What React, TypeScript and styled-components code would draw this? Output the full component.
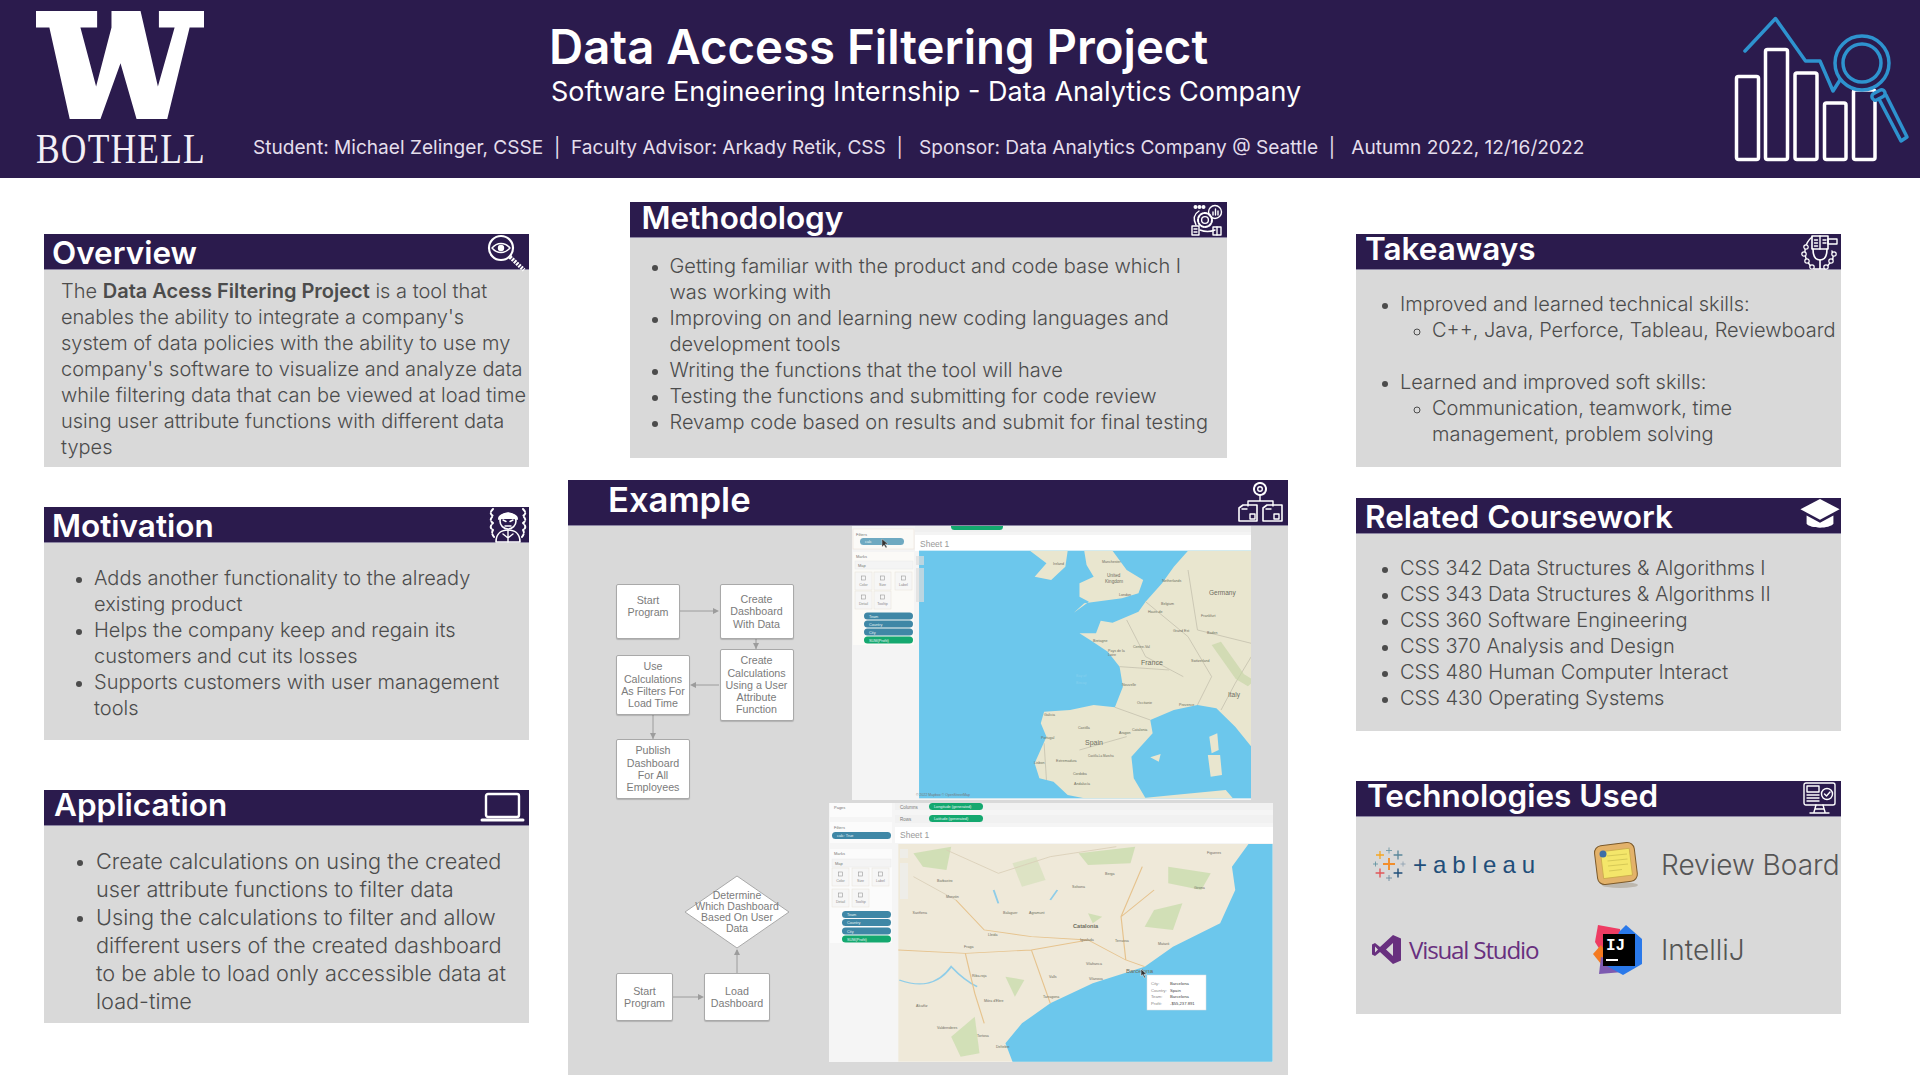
import React from "react";
import styled, { createGlobalStyle } from "styled-components";

const Global = createGlobalStyle`
  html, body { margin: 0; padding: 0; background: #fff; }
  body { font-family: Inter, "Liberation Sans", sans-serif; }
`;

const PURPLE = "#2b1b4d";

const Page = styled.div`
  width: 1920px;
  height: 1080px;
  overflow: hidden;
  background: #fff;
  display: flex;
  flex-direction: column;
`;

const Header = styled.header`
  height: 178px;
  flex: none;
  background: ${PURPLE};
  display: flex;
  position: relative;
`;

const Logo = styled.div`
  width: 168px;
  margin-left: 36px;
  padding-top: 11px;
  flex: none;
`;

const LogoMark = styled.svg`
  display: block;
  width: 168px;
  height: 108px;
`;

const LogoWord = styled.div`
  font-family: "Liberation Serif", serif;
  font-size: 42px;
  line-height: 34px;
  margin-top: 13px;
  color: #f3eff6;
  letter-spacing: 1.4px;
  white-space: nowrap;
  transform: scaleX(0.845);
  transform-origin: left center;
`;

const HeaderText = styled.div`
  margin-left: 49px;
  display: flex;
  flex-direction: column;
  color: #fff;
`;

const Title = styled.h1`
  margin: 19px 0 0 296px;
  font-size: 47.3px;
  line-height: 56px;
  font-weight: 600;
  white-space: nowrap;
`;

const Subtitle = styled.div`
  margin: 0 0 0 298px;
  font-size: 27px;
  line-height: 34px;
  font-weight: 400;
  white-space: nowrap;
`;

const Meta = styled.div`
  margin-top: 25px;
  font-size: 19.1px;
  line-height: 26px;
  color: #e4deec;
  white-space: pre;
`;

const HeaderArt = styled.svg`
  position: absolute;
  right: 0;
  top: 0;
  width: 187px;
  height: 178px;
`;

const Main = styled.main`
  flex: 1;
  display: flex;
  position: relative;
`;

const Column = styled.div<{ $left: number; $width: number; $top: number }>`
  margin-left: ${(p) => p.$left}px;
  width: ${(p) => p.$width}px;
  padding-top: ${(p) => p.$top}px;
  flex: none;
  display: flex;
  flex-direction: column;
  align-items: center;
`;

const Card = styled.section<{ $w: number; $h: number; $after?: number }>`
  width: ${(p) => p.$w}px;
  height: ${(p) => p.$h}px;
  margin-bottom: ${(p) => p.$after ?? 0}px;
  background: #d9d9d9;
  flex: none;
  display: flex;
  flex-direction: column;
`;

const CardHead = styled.div<{ $h?: number; $pad: number; $iconGap: number }>`
  height: ${(p) => p.$h ?? 35}px;
  flex: none;
  background: ${PURPLE};
  border-bottom: 1px solid #8d86a3;
  box-sizing: content-box;
  padding-left: ${(p) => p.$pad}px;
  padding-right: ${(p) => p.$iconGap}px;
  display: flex;
  align-items: center;
  justify-content: space-between;
  position: relative;
  z-index: 1;
`;

const CardTitle = styled.h2<{ $size?: number; $dy?: number }>`
  margin: ${(p) => p.$dy ?? 0}px 0 0;
  align-self: flex-start;
  color: #fff;
  font-size: ${(p) => p.$size ?? 31.5}px;
  font-weight: 600;
  line-height: 35px;
  white-space: nowrap;
`;

const HeadIcon = styled.svg<{ $dy?: number }>`
  flex: none;
  overflow: visible;
  margin-top: ${(p) => p.$dy ?? 0}px;
`;

const CardBody = styled.div<{ $top: number; $left: number; $size?: number; $line?: number }>`
  padding-top: ${(p) => p.$top}px;
  padding-left: ${(p) => p.$left}px;
  padding-right: 0;
  font-size: ${(p) => p.$size ?? 20}px;
  line-height: ${(p) => p.$line ?? 26}px;
  color: #4c4c4c;
  font-weight: 300;
  min-height: 0;
  flex: 1;

  strong {
    font-weight: 600;
  }
`;

const Lines = styled.div`
  white-space: pre;
`;

const Bullets = styled.ul<{ $indent?: number; $after?: number }>`
  list-style: disc;
  margin: 0 0 ${(p) => p.$after ?? 0}px;
  padding: 0 0 0 ${(p) => p.$indent ?? 0}px;

  li {
    white-space: pre;
  }
  li::marker {
    font-size: 0.9em;
  }
`;

const Nested = styled.ul`
  list-style: circle;
  margin: 0;
  padding: 0 0 0 32px;

  li {
    white-space: pre;
  }
`;

const ExampleBody = styled.div`
  flex: 1;
  display: flex;
  min-height: 0;
`;

const Diagram = styled.div`
  position: relative;
  width: 261.5px;
  flex: none;
`;

const DiagramLines = styled.svg`
  position: absolute;
  left: 0;
  top: 0;
  width: 261.5px;
  height: 549px;
`;

const FlowNode = styled.div<{ $x: number; $y: number; $w: number; $h: number; $raise?: number }>`
  position: absolute;
  left: ${(p) => p.$x}px;
  top: ${(p) => p.$y}px;
  width: ${(p) => p.$w}px;
  height: ${(p) => p.$h}px;
  box-sizing: border-box;
  background: #fff;
  border: 1px solid #a9a9a9;
  border-radius: 2px;
  box-shadow: 0 1px 1px rgba(0, 0, 0, 0.18);
  display: flex;
  align-items: center;
  justify-content: center;
  text-align: center;
  font-family: "Liberation Sans", sans-serif;
  font-size: 10.7px;
  line-height: 12.3px;
  color: #7b7b7b;
  padding-bottom: ${(p) => p.$raise ?? 0}px;
`;

const DiamondText = styled.div`
  position: absolute;
  left: 117px;
  top: 350px;
  width: 104px;
  height: 72px;
  display: flex;
  align-items: center;
  justify-content: center;
  text-align: center;
  font-family: "Liberation Sans", sans-serif;
  font-size: 10.5px;
  line-height: 11px;
  color: #7b7b7b;
`;

const Shots = styled.div`
  width: 443.5px;
  flex: none;
  display: flex;
  flex-direction: column;
  align-items: center;
  gap: 3px;
`;

const Shot = styled.svg`
  display: block;
  flex: none;
  font-family: "Liberation Sans", sans-serif;
`;

const TechGrid = styled.div`
  flex: 1;
  padding: 4px 0 0 16px;
  display: grid;
  grid-template-columns: 221px 1fr;
  grid-template-rows: 87px 83px;
  align-items: center;
  align-content: start;
`;

const TechItem = styled.div<{ $gap: number }>`
  display: flex;
  align-items: center;
  gap: ${(p) => p.$gap}px;
`;

const TableauWord = styled.span`
  font-family: "Liberation Sans", sans-serif;
  font-size: 24px;
  color: #1f4e79;
  letter-spacing: 6px;
  white-space: nowrap;
`;

const VSWord = styled.span`
  font-family: "Open Sans", sans-serif;
  font-size: 24.2px;
  color: #68307f;
  letter-spacing: -1.2px;
  white-space: nowrap;
`;

const TechName = styled.span`
  font-size: 28px;
  font-weight: 300;
  color: #555;
  white-space: nowrap;
`;

const ic = { fill: "none", stroke: "#fff", strokeWidth: 1.4, strokeLinejoin: "round", strokeLinecap: "round" } as const;

const EyeIcon = () => (
  <HeadIcon width="38" height="36" viewBox="0 0 38 36" $dy={2}>
    <circle cx="13" cy="13" r="12" {...ic} strokeWidth={2.2} />
    <path d="M4 13c5-6 13-6 18 0-5 6-13 6-18 0z" {...ic} />
    <circle cx="13" cy="13" r="3.2" fill="#fff" />
    <path d="M22 22 L36 35" stroke="#fff" strokeWidth={4} strokeDasharray="2 1" fill="none" />
  </HeadIcon>
);

const WorkerIcon = () => (
  <HeadIcon width="40" height="37" viewBox="0 0 40 37">
    <path d="M11 13c0-7 18-7 18 0" {...ic} strokeWidth={2} fill="#fff" />
    <circle cx="20" cy="15" r="8" {...ic} strokeWidth={1.6} />
    <path d="M15 14l3 1.5M25 14l-3 1.5M17 20h6" {...ic} />
    <path d="M8 36c0-9 6-12 12-12s12 3 12 12z" {...ic} strokeWidth={1.6} />
    <path d="M20 24v12M15 28l5 4 5-4" {...ic} />
    <path d="M5 3c-3 3-3 5 0 7-3 3-3 5 0 7-3 3-3 5 0 7-2 3 0 6 2 8M35 3c3 3 3 5 0 7 3 3 3 5 0 7 3 3 3 5 0 7 2 3 0 6-2 8" {...ic} strokeWidth={2} strokeDasharray="3 2" />
  </HeadIcon>
);

const LaptopIcon = () => (
  <HeadIcon width="43" height="31" viewBox="0 0 43 31">
    <rect x="5" y="2" width="33" height="23" rx="2" {...ic} strokeWidth={2.4} />
    <path d="M1 28h41" {...ic} strokeWidth={3} />
  </HeadIcon>
);

const CogFlowIcon = () => (
  <HeadIcon width="33" height="32" viewBox="0 0 31 32">
    <circle cx="4.5" cy="3" r="1.3" {...ic} fill="#fff" />
    <circle cx="8.5" cy="3" r="1.3" {...ic} fill="#fff" />
    <circle cx="12.5" cy="3" r="1.3" {...ic} fill="#fff" />
    <circle cx="14" cy="16" r="7" {...ic} strokeWidth={2} strokeDasharray="2.5 1.5" />
    <circle cx="14" cy="16" r="3.4" {...ic} />
    <path d="M5 21c-3-6-2-11 3-14M24 26c-5 2-10 2-15 0" {...ic} />
    <circle cx="24" cy="8" r="6.5" {...ic} />
    <path d="M22 11V8M24.5 11V5M27 11V7" {...ic} />
    <path d="M1 22h7v9H1zM3 25h3M3 28h3" {...ic} />
    <rect x="22" y="23" width="8" height="8" {...ic} />
    <path d="M26 23v8" {...ic} />
  </HeadIcon>
);

const ServerCogIcon = () => (
  <HeadIcon width="45" height="40" viewBox="0 0 45 40" $dy={-1}>
    <circle cx="22" cy="7" r="6" {...ic} strokeDasharray="2.5 1" strokeWidth={2} />
    <circle cx="22" cy="7" r="2.3" {...ic} />
    <path d="M22 13v6M10 24v-5h25v5" {...ic} />
    <path d="M1 26l4-3h14v16H1zM25 26l4-3h15v16H25z" {...ic} strokeWidth={1.6} />
    <path d="M12 32h5v5h-5zM36 32h5v5h-5zM4 27h5M28 27h5" {...ic} />
  </HeadIcon>
);

const MicBookIcon = () => (
  <HeadIcon width="36" height="36" viewBox="0 0 36 36">
    <path d="M10 2h16v13H10z" {...ic} strokeWidth={1.6} />
    <path d="M18 2v13M12.5 6h3M12.5 9h3M12.5 12h3M21 6h3M21 9h3" {...ic} />
    <rect x="26" y="5" width="9" height="5" {...ic} />
    <path d="M11 15c0 8 3 11 7 11s7-3 7-11" {...ic} strokeWidth={1.6} />
    <path d="M18 26v9M12 35h12" {...ic} strokeWidth={1.6} />
    <path d="M10 3C3 9 1 18 5 27l5 7M30 17c2 5 1 10-3 13l-3 4" {...ic} />
    {[[4, 13], [2, 20], [5, 27], [10, 33], [32, 20], [29, 27], [24, 33]].map(([x, y], i) => (
      <circle key={i} cx={x} cy={y} r="2.2" fill={PURPLE} {...{ stroke: "#fff", strokeWidth: 1.2 }} />
    ))}
  </HeadIcon>
);

const HatIcon = () => (
  <HeadIcon width="42" height="33" viewBox="0 0 40 32" $dy={-2}>
    <path d="M20 1 L39 11 L20 21 L1 11z" fill="#fff" />
    <path d="M7 17v8c4 5 22 5 26 0v-8l-13 7z" fill="#fff" />
  </HeadIcon>
);

const MonitorIcon = () => (
  <HeadIcon width="33" height="32" viewBox="0 0 33 32" $dy={-1}>
    <rect x="1" y="1" width="31" height="22" rx="2" {...ic} />
    <path d="M4 4h12v6H4zM4 13h12M4 16h12M4 19h12" {...ic} />
    <circle cx="24" cy="12" r="5.5" {...ic} />
    <path d="M21.5 12l2 2 3.5-4" {...ic} />
    <path d="M13 23l-2 7M20 23l2 7M7 31h19M12 27h9" {...ic} />
  </HeadIcon>
);

const TableauMark = () => {
  const crosses: [number, number, number, number, string][] = [
    [16, 17, 6, 1.9, "#f28e2b"],
    [7, 8, 4, 1.3, "#f5a623"],
    [25, 8, 4.4, 1.3, "#59879b"],
    [16, 3.5, 3, 0.9, "#7099a6"],
    [2.5, 17, 2.5, 0.8, "#5b8f9e"],
    [30, 17, 2.5, 0.8, "#8a9fb0"],
    [7, 26, 4.4, 1.4, "#e15759"],
    [25, 26, 4.4, 1.4, "#1f4e79"],
    [16, 31, 3, 0.9, "#6b8ca0"],
  ];
  return (
    <svg width="35" height="35" viewBox="0 0 33 35">
      {crosses.map(([x, y, r, w, c], i) => (
        <path key={i} d={`M${x - r} ${y}h${r * 2}M${x} ${y - r}v${r * 2}`} stroke={c} strokeWidth={w} fill="none" />
      ))}
    </svg>
  );
};

const VSMark = () => (
  <svg width="29" height="29" viewBox="0 0 29 29">
    <path d="M21 0l8 3.5v22L21 29 8 17l-5 4-3-1.5v-10L3 8l5 4zM21 8l-7 6.500 7 6.500zM3 11.500v6l3-3z" fill="#68307f" fillRule="evenodd" />
  </svg>
);

const ReviewMark = () => (
  <svg width="47" height="48" viewBox="0 0 47 48">
    <ellipse cx="27" cy="44" rx="18" ry="3" fill="#bcb7ae" />
    <rect x="3" y="3" width="40" height="39" rx="7" transform="rotate(-7 23 23)" fill="#e3b26a" stroke="#7c5a2b" strokeWidth="1" />
    <rect x="9" y="9" width="29" height="27" transform="rotate(-7 23 23)" fill="#f4e66a" stroke="#c9a94a" strokeWidth="0.8" />
    <path d="M14 15l20-2M14.500 20l20-2M15 25l20-2M16 30l13-1.500" stroke="#d6c957" strokeWidth="1.2" />
    <circle cx="10" cy="13" r="3.5" fill="#3e6ea6" />
  </svg>
);

const IntelliJMark = () => (
  <svg width="50" height="51" viewBox="0 0 50 51" fontFamily="'Liberation Mono', monospace">
    <path d="M2 18L5 1l22 4 2 16-15 16z" fill="#ee3c63" />
    <path d="M0 30l8-9 8 13-8 6z" fill="#f47a20" />
    <path d="M6 50l2-17 16 4 6 11z" fill="#7d5ab0" />
    <path d="M33 1l16 14v25L30 51 14 42 26 8z" fill="#2a79ea" />
    <rect x="10" y="10" width="32" height="32" fill="#000" />
    <text x="13" y="26" fontSize="16" fontWeight="700" fill="#fff">IJ</text>
    <rect x="13" y="35" width="12" height="2" fill="#fff" />
  </svg>
);

const LAND = "#e9e6cf";
const SEA = "#6cc7ec";
const PILL_BLUE = "#3f87a6";
const PILL_GREEN = "#14a86f";

const MapLabel = ({ x, y, t, s = 3.6, w, c = "#6d6d60" }: { x: number; y: number; t: string; s?: number; w?: number; c?: string }) => (
  <text x={x} y={y} fill={c} fontSize={s} fontWeight={w}>{t}</text>
);

const Pill = ({ x, y, w, c, t, h = 7 }: { x: number; y: number; w: number; c: string; t: string; h?: number }) => (
  <g>
    <rect x={x} y={y} width={w} height={h} rx={h / 2} fill={c} />
    <text x={x + 5} y={y + h - 1.8} fontSize={3.8} fill="#e8f4f4">{t}</text>
  </g>
);

const MarkBtn = ({ x, y, t }: { x: number; y: number; t: string }) => (
  <g>
    <rect x={x} y={y} width={17} height={18} fill="#f6f6f6" stroke="#e8e2d8" strokeWidth="0.5" />
    <rect x={x + 6.500} y={y + 4} width={4} height={4} fill="none" stroke="#999" strokeWidth="0.6" />
    <text x={x + 8.500} y={y + 14} fontSize={3.6} fill="#888" textAnchor="middle">{t}</text>
  </g>
);

const ONE_LABELS: [number, number, string, number?][] = [
  [201, 39, "Ireland"], [250, 37, "Manchester"], [255, 51, "United", 4.6], [253, 57, "Kingdom", 4.6],
  [357, 69, "Germany", 6.5], [310, 56, "Netherlands"], [309, 79, "Belgium"], [289, 139, "France", 7],
  [376, 171, "Italy", 6.5], [233, 219, "Spain", 7], [349, 91, "Frankfurt"], [267, 70, "London"],
  [339, 136, "Switzerland"], [241, 116, "Bretagne"], [256, 126, "Pays de la"], [256, 130, "Loire"],
  [281, 122, "Centre-Val"], [270, 160, "Nouvelle"], [285, 178, "Occitanie"], [192, 190, "Galicia"],
  [189, 213, "Portugal"], [267, 208, "Aragon"], [280, 205, "Catalonia"], [226, 203, "Castilla"],
  [204, 236, "Extremadura"], [236, 231, "Castilla-La Mancha", 3], [221, 249, "Cordoba"], [222, 259, "Andalucía"],
  [182, 238, "Lisbon"], [327, 180, "Provence"], [296, 87, "Hauts-de"], [321, 106, "Grand Est"], [355, 108, "Baden"],
];

const TWO_LABELS: [number, number, string, number?, number?][] = [
  [108, 79, "Barbastro"], [117, 95, "Monzón"], [83.5, 111, "Sariñena"], [174, 111, "Balaguer"], [200, 111, "Agramunt"],
  [159, 133, "Lleida"], [244, 125, "Catalonia", 5.6, 700], [251, 138, "Igualada"], [286, 139, "Terrassa"], [329, 142, "Mataró"],
  [243, 85, "Solsona"], [276, 72, "Berga"], [365, 86, "Girona"], [378, 51, "Figueres"], [297, 170, "Barcelona", 6],
  [214, 195, "Tarragona"], [220, 175, "Valls"], [257, 162, "Vilafranca"], [260, 177, "Vilanova"], [143, 174, "Riba-roja"],
  [135, 145, "Fraga"], [155, 199, "Móra d'Ebre"], [87, 204, "Alcañiz"], [108, 226, "Valderrobres"], [148, 234, "Tortosa"],
  [167, 245, "Deltebre"],
];

const MapOne = () => (
  <Shot width="399" height="274" viewBox="0 0 399 274">
    <rect width="399" height="274" fill="#f4f4f4" />
    <rect x="63" y="0" width="336" height="6" fill="#f0f0f0" />
    <rect x="99" y="-3" width="52" height="7" rx="3.500" fill={PILL_GREEN} />
    <rect x="63" y="9" width="336" height="16" fill="#fff" />
    <text x="68" y="21" fontSize="8.500" fill="#999">Sheet 1</text>
    <rect x="1" y="3" width="61" height="20" fill="#fbfaf7" stroke="#eadfd2" strokeWidth="0.5" />
    <text x="4" y="9.500" fontSize="4" fill="#777">Filters</text>
    <Pill x={8} y={12} w={44} c="#6ea9c1" t="calc" />
    <path d="M30 13l0 8 2-2 2 3 1-1-2-3 3 0z" fill="#333" stroke="#ddd" strokeWidth="0.4" />
    <rect x="1" y="26" width="61" height="93" fill="#fbfaf7" />
    <text x="4" y="32" fontSize="4" fill="#777">Marks</text>
    <rect x="3" y="35" width="58" height="8" fill="#f4f4f4" stroke="#e5e5e5" strokeWidth="0.4" />
    <text x="6" y="41" fontSize="4" fill="#777">Map</text>
    <MarkBtn x={3} y={46} t="Color" />
    <MarkBtn x={22} y={46} t="Size" />
    <MarkBtn x={43} y={46} t="Label" />
    <MarkBtn x={3} y={65} t="Detail" />
    <MarkBtn x={22} y={65} t="Tooltip" />
    <Pill x={12} y={86.500} w={49} c={PILL_BLUE} t="Team" />
    <Pill x={12} y={94.500} w={49} c={PILL_BLUE} t="Country" />
    <Pill x={12} y={102.500} w={49} c={PILL_BLUE} t="City" />
    <Pill x={12} y={110.500} w={49} c={PILL_GREEN} t="SUM(Profit)" />

    <g transform="translate(-291.6 -56) scale(0.4719 0.3333)">
      <rect x="760" y="242" width="704" height="743" fill={SEA} />
      <path fill={LAND} d="M1464 242 L1330 242 L1300 290 L1275 340 L1240 395 L1225 425 L1170 458 L1145 452 L1135 490 L1100 490 L1125 512 L1160 545 L1185 590 L1192 650 L1175 712 L1130 705 L1080 720 L1025 725 L1018 760 L1030 800 L1005 880 L1015 925 L1045 935 L1075 975 L1110 985 L1240 985 L1215 925 L1210 860 L1255 790 L1250 750 L1300 720 L1350 705 L1390 715 L1430 770 L1464 830z" />
      <path fill={LAND} d="M1110 242 L1170 242 L1200 300 L1235 330 L1225 370 L1190 385 L1110 400 L1088 428 L1120 395 L1100 380 L1100 340 L1130 320 L1115 285z" />
      <path fill={LAND} d="M995 242 L1075 242 L1070 290 L1040 330 L1005 320 L1030 280z" />
      <path fill={LAND} d="M1375 800 L1392 790 L1395 840 L1380 850zM1372 855 L1398 855 L1402 915 L1378 920zM1250 862 L1272 852 L1268 875zM1230 985 L1425 985 L1410 960 L1300 975z" />
      <path d="M1464 560 L1430 640 L1400 720M1240 395 L1330 500 L1380 620 L1350 705M1175 712 L1250 750M1025 820 L1030 930M1330 300 L1350 480 L1464 520M1200 450 L1240 560 L1320 620M1185 590 L1290 600M1100 840 L1200 800" fill="none" stroke="#c4c1ae" strokeWidth="2" />
      <path d="M1390 520 L1440 620 L1464 640" fill="none" stroke="#c8d6a8" strokeWidth="22" opacity="0.7" />
    </g>
    <rect x="64" y="30" width="8" height="9" fill="#ddd" opacity="0.7" />
    <rect x="64" y="42" width="8" height="34" fill="#ddd" opacity="0.7" />
    {ONE_LABELS.map(([x, y, t, s], i) => (
      <MapLabel key={i} x={x} y={y} t={t} s={s} />
    ))}
    <MapLabel x={224} y={151} t="Bay of" c="#86d0ee" />
    <MapLabel x={224} y={158} t="Biscay" c="#86d0ee" />
    <text x="64" y="270" fontSize="3.500" fill="#777">© 2022 Mapbox © OpenStreetMap</text>
  </Shot>
);

const MapTwo = () => (
  <Shot width="444" height="259" viewBox="0 0 444 259">
    <rect width="444" height="259" fill="#f5f5f5" />
    <rect x="66" y="24" width="378" height="16" fill="#fff" />
    <rect x="66" y="0" width="378" height="7" fill="#f1f1f1" />
    <rect x="66" y="12" width="378" height="8" fill="#f1f1f1" />
    <text x="71" y="5.500" fontSize="4.500" fill="#777">Columns</text>
    <text x="71" y="18" fontSize="4.500" fill="#777">Rows</text>
    <Pill x={100} y={0} w={54} c={PILL_GREEN} t="Longitude (generated)" />
    <Pill x={100} y={12} w={54} c={PILL_GREEN} t="Latitude (generated)" />
    <text x="71" y="35" fontSize="8.500" fill="#999">Sheet 1</text>
    <rect x="1" y="0" width="62" height="14" fill="#fbfbfb" />
    <text x="5" y="6" fontSize="4" fill="#777">Pages</text>
    <rect x="1" y="19" width="62" height="21" fill="#fbfbfb" />
    <text x="5" y="25.500" fontSize="4" fill="#777">Filters</text>
    <Pill x={3} y={29} w={59} c={PILL_BLUE} t="calc: True" />
    <rect x="1" y="46" width="62" height="94" fill="#fbfbfb" />
    <text x="5" y="52" fontSize="4" fill="#777">Marks</text>
    <rect x="3" y="56" width="59" height="8" fill="#f4f4f4" stroke="#e5e5e5" strokeWidth="0.4" />
    <text x="6" y="62" fontSize="4" fill="#777">Map</text>
    <MarkBtn x={3} y={65} t="Color" />
    <MarkBtn x={23} y={65} t="Size" />
    <MarkBtn x={43} y={65} t="Label" />
    <MarkBtn x={3} y={86} t="Detail" />
    <MarkBtn x={23} y={86} t="Tooltip" />
    <Pill x={13} y={108} w={49} c={PILL_BLUE} t="Team" />
    <Pill x={13} y={116} w={49} c={PILL_BLUE} t="Country" />
    <Pill x={13} y={124.500} w={49} c={PILL_BLUE} t="City" />
    <Pill x={13} y={132.500} w={49} c={PILL_GREEN} t="SUM(Profit)" />

    <g transform="translate(-269.5 -13) scale(0.4719 0.3333)">
      <rect x="718" y="162" width="793" height="653" fill="#efe9d9" />
      <path fill={SEA} d="M1511 162 L1460 162 L1425 230 L1432 300 L1400 400 L1300 470 L1240 530 L1130 580 L1040 640 L980 700 L945 760 L960 815 L1511 815z" />
      <g fill="#c8dcab" opacity="0.75">
        <path d="M750 190 L830 170 L820 240 L770 230z" />
        <path d="M1100 190 L1220 170 L1210 220 L1120 225z" />
        <path d="M1290 230 L1380 250 L1360 300 L1290 280z" />
        <path d="M1260 360 L1320 340 L1300 420 L1240 410z" />
        <path d="M830 740 L880 680 L890 790 L850 800z" />
        <path d="M945 560 L985 570 L965 620z" />
        <path d="M1120 370 L1150 380 L1130 400z" />
        <path d="M960 220 L1010 200 L1030 270 L980 290z" opacity="0.6" />
      </g>
      <path d="M920 300 L930 340 M1040 330 L1055 300M720 570 C760 590 800 590 830 530 C850 560 870 580 885 590" fill="none" stroke="#8fcde8" strokeWidth="4" />
      <path d="M718 480 L860 490 L1000 480 L1120 450 L1200 510 L1240 530 M860 490 L880 610 L900 700 M1000 480 L1040 640 M1200 510 L1190 380 L1235 230 M840 330 L900 420 L1000 440 L1120 450 M1190 380 L1260 300" fill="none" stroke="#e6c38e" strokeWidth="2.5" />
      <path d="M820 180 L930 250 L1040 200 L1180 170 M750 260 L840 330" fill="none" stroke="#d9cdb5" strokeWidth="2" />
    </g>
    <rect x="71" y="46" width="8" height="9" fill="#eee" opacity="0.7" />
    <rect x="71" y="60" width="8" height="36" fill="#eee" opacity="0.7" />
    {TWO_LABELS.map(([x, y, t, s, w], i) => (
      <MapLabel key={i} x={x} y={y} t={t} s={s} w={w} />
    ))}
    <path d="M312 166v7l1.700-1.300 1.700 3.300 1.200-.7-1.700-3h2.800z" fill="#333" stroke="#fff" strokeWidth="0.5" />
    <rect x="318" y="172" width="59" height="35" fill="#fff" stroke="#ddd" strokeWidth="0.5" />
    <g fontSize="4.200" fill="#888">
      <text x="322" y="182">City:</text>
      <text x="322" y="188.500">Country:</text>
      <text x="322" y="195">Team:</text>
      <text x="322" y="201.500">Profit:</text>
    </g>
    <g fontSize="4.200" fill="#444">
      <text x="341" y="182">Barcelona</text>
      <text x="341" y="188.500">Spain</text>
      <text x="341" y="195">Barcelona</text>
      <text x="341" y="201.500">-$55,237.891</text>
    </g>
  </Shot>
);

const FlowDiagram = () => (
  <Diagram>
    <DiagramLines viewBox="0 0 261.5 549" fill="none" stroke="#9c9c9c" strokeWidth="1">
      <path d="M112 85h37M188 113v10M151 159h-27M85 189v24M105 471h29M169 447V424" />
      <g fill="#9c9c9c" stroke="none">
        <path d="M151 85l-6-3v6z" />
        <path d="M188 123l-3-6h6z" />
        <path d="M122 159l6-3v6z" />
        <path d="M85 213l-3-6h6z" />
        <path d="M136 471l-6-3v6z" />
        <path d="M169 423l-3 6h6z" />
      </g>
      <path d="M169 350 L117 386 L169 422 L221 386z" fill="#fff" stroke="#a9a9a9" />
    </DiagramLines>
    <FlowNode $x={48} $y={58} $w={64} $h={55} $raise={11}>Start<br />Program</FlowNode>
    <FlowNode $x={151.500} $y={58} $w={74} $h={55}>Create<br />Dashboard<br />With Data</FlowNode>
    <FlowNode $x={151.500} $y={123} $w={74} $h={72}>Create<br />Calculations<br />Using a User<br />Attribute<br />Function</FlowNode>
    <FlowNode $x={48} $y={129} $w={74} $h={60}>Use<br />Calculations<br />As Filters For<br />Load Time</FlowNode>
    <FlowNode $x={48} $y={213} $w={74} $h={60}>Publish<br />Dashboard<br />For All<br />Employees</FlowNode>
    <DiamondText>Determine<br />Which Dashboard<br />Based On User<br />Data</DiamondText>
    <FlowNode $x={48} $y={447} $w={57} $h={48}>Start<br />Program</FlowNode>
    <FlowNode $x={136} $y={447} $w={66} $h={48}>Load<br />Dashboard</FlowNode>
  </Diagram>
);

export default function App() {
  return (
    <Page>
      <Global />
      <Header>
        <Logo>
          <LogoMark viewBox="17 18 503 325" preserveAspectRatio="none">
            <polygon
              fill="#fff"
              points="17,18 200,18 200,68 150,68 197,245 243,68 243,18 330,18 382,245 432,68 385,68 385,18 520,18 520,68 477,68 410,343 318,343 270,175 210,343 118,343 57,68 17,68"
            />
          </LogoMark>
          <LogoWord>BOTHELL</LogoWord>
        </Logo>
        <HeaderText>
          <Title>Data Access Filtering Project</Title>
          <Subtitle>Software Engineering Internship - Data Analytics Company</Subtitle>
          <Meta>{"Student: Michael Zelinger, CSSE  |  Faculty Advisor: Arkady Retik, CSS  |   Sponsor: Data Analytics Company @ Seattle  |   Autumn 2022, 12/16/2022"}</Meta>
        </HeaderText>
        <HeaderArt viewBox="0 0 187 178" fill="none">
          <g stroke="#fff" strokeWidth="3.5" transform="translate(1.5 0)">
            <rect x="2" y="76.500" width="22" height="83" rx="2" />
            <rect x="31" y="49.500" width="22" height="110" rx="2" />
            <rect x="60.500" y="73" width="22" height="86.500" rx="2" />
            <rect x="90" y="103" width="21.500" height="56.500" rx="2" />
            <rect x="119" y="90" width="21.500" height="69.500" rx="2" />
          </g>
          <g stroke="#2e93cf" strokeWidth="3.5" strokeLinejoin="round" strokeLinecap="round">
            <path d="M12 51 L42.500 18.500 L72.500 61 L87 61 L100 91 L107 80" />
            <circle cx="129" cy="63" r="27" fill={PURPLE} />
            <circle cx="129" cy="63" r="19" />
            <rect x="-7" y="-3.500" width="14" height="7" rx="3.500" transform="translate(145.500 95) rotate(-28)" fill={PURPLE} />
            <path d="M146 99 L168 141 L174 137 L153 95" />
          </g>
        </HeaderArt>
      </Header>
      <Main>
        <Column $left={44} $width={485} $top={56}>
          <Card $w={485} $h={233} $after={40}>
            <CardHead $pad={8} $iconGap={3}>
              <CardTitle $dy={1}>Overview</CardTitle>
              <EyeIcon />
            </CardHead>
            <CardBody $top={8} $left={17}>
              <Lines>The <strong>Data Acess Filtering Project</strong> is a tool that{"\n"}enables the ability to integrate a company's{"\n"}system of data policies with the ability to use my{"\n"}company's software to visualize and analyze data{"\n"}while filtering data that can be viewed at load time{"\n"}using user attribute functions with different data{"\n"}types</Lines>
            </CardBody>
          </Card>
          <Card $w={485} $h={233} $after={50}>
            <CardHead $pad={8} $iconGap={1}>
              <CardTitle $dy={1}>Motivation</CardTitle>
              <WorkerIcon />
            </CardHead>
            <CardBody $top={22} $left={50}>
              <Bullets>
                <li>{"Adds another functionality to the already\nexisting product"}</li>
                <li>{"Helps the company keep and regain its\ncustomers and cut its losses"}</li>
                <li>{"Supports customers with user management\ntools"}</li>
              </Bullets>
            </CardBody>
          </Card>
          <Card $w={485} $h={233}>
            <CardHead $pad={10} $iconGap={5}>
              <CardTitle $dy={-3.5}>Application</CardTitle>
              <LaptopIcon />
            </CardHead>
            <CardBody $top={21} $left={52} $size={21.7} $line={28}>
              <Bullets>
                <li>{"Create calculations on using the created\nuser attribute functions to filter data"}</li>
                <li>{"Using the calculations to filter and allow\ndifferent users of the created dashboard\nto be able to load only accessible data at\nload-time"}</li>
              </Bullets>
            </CardBody>
          </Card>
        </Column>
        <Column $left={39} $width={720} $top={24}>
          <Card $w={597} $h={256} $after={22}>
            <CardHead $pad={12} $iconGap={4}>
              <CardTitle $dy={-2.5}>Methodology</CardTitle>
              <CogFlowIcon />
            </CardHead>
            <CardBody $top={15} $left={40}>
              <Bullets>
                <li>{"Getting familiar with the product and code base which I\nwas working with"}</li>
                <li>{"Improving on and learning new coding languages and\ndevelopment tools"}</li>
                <li>Writing the functions that the tool will have</li>
                <li>Testing the functions and submitting for code review</li>
                <li>Revamp code based on results and submit for final testing</li>
              </Bullets>
            </CardBody>
          </Card>
          <Card $w={720} $h={595}>
            <CardHead $h={45} $pad={40} $iconGap={5}>
              <CardTitle $size={34.6} $dy={2}>Example</CardTitle>
              <ServerCogIcon />
            </CardHead>
            <ExampleBody>
              <FlowDiagram />
              <Shots>
                <MapOne />
                <MapTwo />
              </Shots>
            </ExampleBody>
          </Card>
        </Column>
        <Column $left={68} $width={485} $top={56}>
          <Card $w={485} $h={233} $after={31}>
            <CardHead $pad={9} $iconGap={3}>
              <CardTitle $dy={-3}>Takeaways</CardTitle>
              <MicBookIcon />
            </CardHead>
            <CardBody $top={21} $left={44}>
              <Bullets $after={26}>
                <li>
                  Improved and learned technical skills:
                  <Nested>
                    <li>C++, Java, Perforce, Tableau, Reviewboard</li>
                  </Nested>
                </li>
              </Bullets>
              <Bullets>
                <li>
                  Learned and improved soft skills:
                  <Nested>
                    <li>{"Communication, teamwork, time\nmanagement, problem solving"}</li>
                  </Nested>
                </li>
              </Bullets>
            </CardBody>
          </Card>
          <Card $w={485} $h={233} $after={50}>
            <CardHead $pad={9} $iconGap={0}>
              <CardTitle $dy={1}>Related Coursework</CardTitle>
              <HatIcon />
            </CardHead>
            <CardBody $top={21} $left={44}>
              <Bullets>
                <li>CSS 342 Data Structures &amp; Algorithms I</li>
                <li>CSS 343 Data Structures &amp; Algorithms II</li>
                <li>CSS 360 Software Engineering</li>
                <li>CSS 370 Analysis and Design</li>
                <li>CSS 480 Human Computer Interact</li>
                <li>CSS 430 Operating Systems</li>
              </Bullets>
            </CardBody>
          </Card>
          <Card $w={485} $h={233}>
            <CardHead $pad={11} $iconGap={5}>
              <CardTitle $dy={-3}>Technologies Used</CardTitle>
              <MonitorIcon />
            </CardHead>
            <TechGrid>
              <TechItem $gap={6}>
                <TableauMark />
                <TableauWord>+ableau</TableauWord>
              </TechItem>
              <TechItem $gap={21}>
                <ReviewMark />
                <TechName>Review Board</TechName>
              </TechItem>
              <TechItem $gap={8}>
                <VSMark />
                <VSWord>Visual Studio</VSWord>
              </TechItem>
              <TechItem $gap={18}>
                <IntelliJMark />
                <TechName>IntelliJ</TechName>
              </TechItem>
            </TechGrid>
          </Card>
        </Column>
      </Main>
    </Page>
  );
}
